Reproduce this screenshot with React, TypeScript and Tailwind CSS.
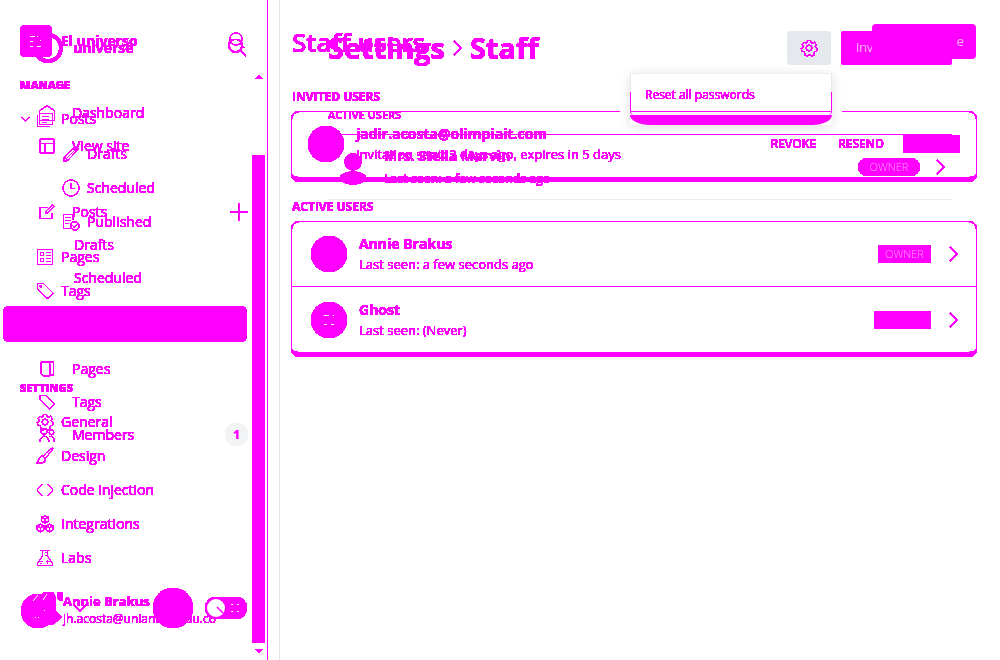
import React from 'react';

const INK = 'text-[#ff00ff] [filter:url(#ink)]';
const FONT = "font-['Open_Sans','Noto_Sans',sans-serif]";

type IconProps = { d: string; size?: string; box?: string; width?: string };

function Icon({ d, size = 'size-[18px]', box = '0 0 18 18', width = '1' }: IconProps) {
  return (
    <svg className={`${size} shrink-0`} viewBox={box} fill="none" stroke="currentColor" strokeWidth={width} aria-hidden="true">
      <path d={d} />
    </svg>
  );
}

const GEAR =
  'M7.4 1.5h3.2l.4 2 1.6.8 2-1 1.6 2.2-1 1.8.5 1.4 1.6.8-.6 2.8-2 .3-.8 1.4.4 2-2.4 1.2-1.6-1.6H8.5l-1.6 1.6-2.4-1.2.3-2-.9-1.4-2-.3-.6-2.8 1.7-.8.4-1.4-1-1.8L4 3.3l2 1 1.2-.8ZM9 6.2a2.8 2.8 0 1 0 0 5.6 2.8 2.8 0 0 0 0-5.6Z';
const PENCIL = 'M1.5 16.5l1-4.5L12.8 1.8q1.6-.8 3 1 .8 1-.2 2.4L5.8 15.3ZM2.8 12l3 3.2M11 3.6l3.2 3.2M4.4 13.6l8-8';
const CLOCK = 'M9 1a8 8 0 1 0 0 16A8 8 0 0 0 9 1ZM9 4.5V9.5h4';
const PUBLISHED = 'M8.5 15.5h-7v-14h9.5v5M3.5 4.5h5M3.5 7.5h5M3.5 10.5h3M12.8 8.6a4.2 4.2 0 1 0 0 8.4 4.2 4.2 0 0 0 0-8.4ZM10.8 13l1.5 1.4 2.5-3';
const PAGES = 'M.5.5h15v15H.5ZM3.5 3.5h3v3h-3ZM3.5 9.5h3v3h-3ZM9 3.5h4.5M9 6.5h4.5M9 9.5h4.5M9 12.5h4.5';
const TAG = 'M1.5 1.500h6l9 9q.8 1-.2 1.800l-3.800 3.600q-1 .8-1.800 0L1.500 7.500ZM4 3.500h1.200v1.500H4Z';
const BRUSH = 'M16.8 1.2q-2-.6-9.8 8l2 2q8-8 7.8-10ZM7 9.2q-3-.6-4 2.3-.4 3-2.5 4.5 6 1.3 8.2-1.4Q10 12.5 9 11.2';
const CODE = 'M6 3.5L1 9l5 5.5M12 3.5L17 9l-5 5.5';
const CUBES = 'M9 .8l3.5 1.6v4L9 8.2 5.5 6.4v-4ZM5.5 2.4L9 4.2l3.5-1.8M9 4.2v4M4.5 9.2L8 10.8v4L4.5 17 1 15v-4.2ZM1 10.8l3.5 1.8L8 10.8M4.5 12.6V17M13.5 9.2l3.5 1.6V15l-3.5 2-3.5-2v-4.2ZM10 10.8l3.5 1.8 3.5-1.8M13.5 12.6V17';
const FLASK = 'M4.5 1.5h9M6.5 1.5V7L1.5 14.5v2h15v-2L11.5 7V1.5M9.5 3.5h2M9 6.5h2M4 12.5h3M10.5 12.5h3M11.5 11.5v3M4.5 14.5h1';
const POSTS = 'M3.5 3.5h13v11h-13ZM1.5 5v11.5h12M6 6.5h7M6 9.5h7M6 12.5h5';
const HOUSE = 'M.5 5.5L8 .8l7.5 4.7v10H.5ZM4 8.5h7';
const LAYOUT = 'M1 2.5Q1 1 2.5 1h11Q15 1 15 2.5v11q0 1.5-1.5 1.5h-11Q1 15 1 13.5ZM1 5.5h14M6 5.5V15';
const EDIT = 'M9 3.5H1v11h12V9M6.5 9.5l1-3L13.5.8l1.7 1.7-6 6ZM6.5 9.5L9.2 8.5';
const PAGE_STACK = 'M4 1h10.5v13h-3M2 1h7q2 1 2 3v11H5q-3-1-3-3Z';
const TAG_OUTLINE = 'M1 1.5h6l8.3 8.3-5 5L1 6Z';
const MEMBERS = 'M5 1.5a3 3 0 1 0 0 6 3 3 0 0 0 0-6ZM12.5 3a2.3 2.3 0 1 0 0 4.6 2.3 2.3 0 0 0 0-4.6ZM.8 15q0-5 4.5-6 4.5 1 4.5 6M10.5 9.5q4.8-1 5 5.5';

function Row({ icon, label, sub = false, box }: { icon: string; label: string; sub?: boolean; box?: string }) {
  return (
    <li>
      <a href="#" className={`flex h-[34px] items-center gap-[7px] pb-px ${sub ? 'pl-[62px]' : 'pl-[36px]'} text-[14px]`}>
        <Icon d={icon} box={box} />
        {label}
      </a>
    </li>
  );
}

function ModernRow({ icon, label, children }: { icon?: string; label: string; children?: React.ReactNode }) {
  return (
    <li className={`flex h-[33px] items-center pr-[31px] ${icon ? 'pl-[39px]' : 'pl-[74px]'}`}>
      <a href="#" className="flex items-center gap-[17px] text-[14px]">
        {icon && <Icon d={icon} size="size-4" box="0 0 16 16" />}
        {label}
      </a>
      {children}
    </li>
  );
}

function Chevron({ width = '1.2' }: { width?: string }) {
  return <Icon d="M1 1l7 7-7 7" size="w-[9px] h-4" box="0 0 9 16" width={width} />;
}

function ClassicSidebar() {
  return (
    <aside className={`flex w-[268px] shrink-0 border-r border-[#ff00ff] font-medium ${INK}`}>
      <div className="flex min-w-0 flex-1 flex-col pt-[25px] pb-8">
        <div className="flex h-8 items-center gap-[9px] pr-[7px] pl-5">
          <svg className="size-8 shrink-0" viewBox="0 0 32 32" aria-hidden="true">
            <rect width="32" height="32" rx="5" fill="#ff00ff" />
            <path d="M10 11.5h5M17 11.5h3M17 15.5h4M15 18.5h2M10 21.5h3M16 21.5h5M19 13.5h1M10 16.5h3" stroke="#fff" />
          </svg>
          <strong className="text-[14px] leading-7 font-bold">El universo</strong>
          <button aria-label="Search" className="ml-auto">
            <Icon d="M9 1a6 6 0 1 0 0 12A6 6 0 0 0 9 1ZM13.5 11.5L17 16" />
          </button>
        </div>
        <h2 className="mt-[18px] pl-5 text-[11px] leading-5 font-extrabold">MANAGE</h2>
        <nav>
          <ul className="mt-[7px]">
            <li className="flex h-[34px] items-center pb-px pl-[20px]">
              <Icon d="M1 1l4.5 4L10 1" size="w-[11px] h-[6px]" box="0 0 11 6" />
              <a href="#" className="flex items-center gap-[7px] pl-[5px] text-[14px]">
                <Icon d={POSTS} />
                Posts
              </a>
            </li>
            <li>
              <ul className="my-px">
                <Row sub icon={PENCIL} label="Drafts" />
                <Row sub icon={CLOCK} label="Scheduled" />
                <Row sub icon={PUBLISHED} label="Published" />
              </ul>
            </li>
            <Row icon={PAGES} box="-1 -1 18 18" label="Pages" />
            <Row icon={TAG} label="Tags" />
            <li>
              <a href="#" aria-label="Staff" className="-mt-0.5 mr-[5px] ml-[3px] block h-9 rounded-md bg-[#ff00ff]" />
            </li>
          </ul>
          <h2 className="mt-9 pl-5 text-[11px] leading-5 font-extrabold">SETTINGS</h2>
          <ul className="mt-[7px]">
            <Row icon={GEAR} label="General" />
            <Row icon={BRUSH} label="Design" />
            <Row icon={CODE} label="Code injection" />
            <Row icon={CUBES} label="Integrations" />
            <Row icon={FLASK} label="Labs" />
          </ul>
        </nav>
        <div className="mt-auto flex h-9 pl-[21px] text-[12px] leading-[18px]">
          <svg className="h-9 w-[42px] shrink-0" viewBox="0 0 42 36" aria-hidden="true">
            <circle cx="17" cy="19" r="17" fill="#ff00ff" />
            <path d="M14 8L24 0h8l3 6v13l6 6-8 7-14 2Z" fill="#ff00ff" />
            <path d="M36 0h10v9h-7l-3-3Z" fill="#ff00ff" />
            <path d="M12 9l5-6M22 8l4-6M23 18.5h1M14 25.5h1M17 25.5h1" stroke="#fff" />
            <path d="M22 .5Q28-.5 33 1" stroke="#ff00ff" fill="none" />
          </svg>
          <div className="whitespace-nowrap">
            <div className="text-[13px] font-bold">Annie Brakus</div>
            <div>jh.acosta@uniandes.edu.co</div>
          </div>
        </div>
      </div>
      <div className="mr-[2px] flex w-[13px] flex-col items-center pt-[75px] pb-[7px]">
        <svg className="h-[4px] w-2" viewBox="0 0 8 4" fill="currentColor"><path d="M0 4l4-4 4 4Z" /></svg>
        <div className="mt-[76px] mb-[6px] w-full flex-1 bg-[#ff00ff]" />
        <svg className="h-[4px] w-2" viewBox="0 0 8 4" fill="currentColor"><path d="M0 0l4 4 4-4Z" /></svg>
      </div>
    </aside>
  );
}

function Member({ name, seen, avatar, children }: { name: string; seen: string; avatar?: React.ReactNode; children: React.ReactNode }) {
  return (
    <li className="flex h-[65px] items-center pr-[18px] pl-[19px]">
      <span className="grid size-9 shrink-0 place-items-center rounded-full bg-[#ff00ff]">{avatar}</span>
      <div className="ml-3 flex-1 leading-[21px]">
        <h3 className="text-[14px] font-bold">{name}</h3>
        <p className="text-[13px]">{seen}</p>
      </div>
      {children}
      <a href="#" aria-label={name} className="ml-[18px]"><Chevron /></a>
    </li>
  );
}

function ClassicMain() {
  return (
    <main className="min-w-0 flex-1 px-6 pt-6">
      <header className="flex h-[35px] items-center justify-between">
        <h1 className={`text-[26px] leading-8 font-semibold ${INK}`}>Staff users</h1>
        <button aria-label="Invite people" className="relative z-10 h-[35px] w-[104px] rounded-[4px] bg-[#ff00ff] pr-3 text-right text-[13px] font-light text-white">
          e
        </button>
      </header>
      <h2 className={`mt-[30px] text-[12px] leading-4 font-bold ${INK}`}>INVITED USERS</h2>
      <section className={`-mx-px mt-[6px] rounded-lg border border-b-[5px] border-[#ff00ff] ${INK}`}>
        <div className="flex h-[65px] items-center pr-4 pb-px pl-4">
          <span className="size-9 shrink-0 rounded-full bg-[#ff00ff]" />
          <div className="ml-3 flex-1 leading-[21px]">
            <h3 className="text-[14px] font-bold">jadir.acosta@olimpiait.com</h3>
            <p className="text-[13px]">Invitation sent: 2 days ago, expires in 5 days</p>
          </div>
          <button className="text-[12px] font-semibold">REVOKE</button>
          <button className="ml-[22px] text-[12px] font-semibold">RESEND</button>
          <span className="ml-[19px] h-[18px] w-[57px] rounded-[2px] bg-[#ff00ff]" />
        </div>
      </section>
      <h2 className={`mt-[17px] text-[12px] leading-4 font-bold ${INK}`}>ACTIVE USERS</h2>
      <ul className={`-mx-px mt-[6px] divide-y divide-[#ff00ff] rounded-lg border border-b-[5px] border-[#ff00ff] ${INK}`}>
        <Member name="Annie Brakus" seen="Last seen: a few seconds ago">
          <span className="h-[18px] w-[53px] bg-[#ff00ff] text-center text-[11px] leading-[18px] font-light text-white/60">OWNER</span>
        </Member>
        <Member
          name="Ghost"
          seen="Last seen: (Never)"
          avatar={
            <svg className="h-[10px] w-[10px]" viewBox="0 0 10 10" stroke="#fff" aria-hidden="true">
              <path d="M0 .5h5M9 .5h1M0 9.5h3M7 9.5h3" />
            </svg>
          }
        >
          <span className="h-[18px] w-[57px] rounded-[2px] bg-[#ff00ff]" />
        </Member>
      </ul>
    </main>
  );
}

function ModernSidebar() {
  return (
    <aside className="flex w-[280px] shrink-0 flex-col border-r border-[#e5e5e5] pt-[33px] pb-8 font-medium">
      <div className={`flex h-[30px] items-center gap-[10px] pr-[33px] pl-[33px] ${INK}`}>
        <svg className="size-[30px] shrink-0" viewBox="0 0 30 30" aria-hidden="true">
          <circle cx="15" cy="15" r="13" fill="none" stroke="#ff00ff" strokeWidth="3.5" />
        </svg>
        <strong className="text-[14px] leading-7 font-bold">universe</strong>
        <button aria-label="Search site" className="ml-auto">
          <Icon d="M7.5 0a6.5 6.5 0 1 0 0 13A6.5 6.5 0 0 0 7.5 0ZM12.5 11.5L18 17" width="1.5" />
        </button>
      </div>
      <nav className={INK}>
        <ul className="mt-[33px]">
          <ModernRow icon={HOUSE} label="Dashboard" />
          <ModernRow icon={LAYOUT} label="View site" />
        </ul>
        <ul className="mt-[33px]">
          <ModernRow icon={EDIT} label="Posts">
            <button aria-label="New post" className="ml-auto"><Icon d="M9 0v18M0 9h18" width="1.5" /></button>
          </ModernRow>
          <ModernRow label="Drafts" />
          <ModernRow label="Scheduled" />
        </ul>
        <ul className="mt-[58px]">
          <ModernRow icon={PAGE_STACK} label="Pages" />
          <ModernRow icon={TAG_OUTLINE} label="Tags" />
          <ModernRow icon={MEMBERS} label="Members">
            <span className="ml-auto grid size-[23px] place-items-center rounded-full bg-[#f1f3f4] text-[12px] font-extrabold">1</span>
          </ModernRow>
        </ul>
      </nav>
      <div className={`mt-auto flex h-10 items-center pr-8 pl-[73px] ${INK}`}>
        <Icon d="M1 1l6 6 6-6" size="w-[14px] h-[8px]" box="0 0 14 8" width="1.5" />
        <span className="ml-auto size-10 rounded-full bg-[#ff00ff]" />
        <label className="ml-3 flex">
          <input type="checkbox" aria-label="Night mode" className="peer sr-only" />
          <svg className="h-[22px] w-[42px]" viewBox="0 0 42 22" aria-hidden="true">
            <rect width="42" height="22" rx="11" fill="#ff00ff" />
            <circle cx="11" cy="11" r="9" fill="#fff" />
            <path d="M12 10l6 6" stroke="#ff00ff" strokeWidth="1.5" />
            <path d="M26 7.5h2M32 7.5h2M26 14.5h2M32 14.5h2" stroke="#fff" />
          </svg>
        </label>
      </div>
    </aside>
  );
}

function ModernMain() {
  return (
    <main className="min-w-0 flex-1 px-12 pt-[31px]">
      <header className="flex h-[34px] items-center">
        <h1 className={`flex items-center gap-2 text-[29px] leading-8 font-bold ${INK}`}>
          Settings
          <Chevron />
          Staff
        </h1>
        <div className="relative ml-auto">
          <button aria-label="Staff settings" className="grid h-[34px] w-11 place-items-center rounded-[3px] bg-[#e5e9ed]">
            <span className={INK}><Icon d={GEAR} /></span>
          </button>
          <div className="absolute top-[42px] -right-[11px] z-20 w-[222px] bg-white px-[10px] whitespace-nowrap">
            <div className="rounded-[3px] shadow-[0_2px_12px_rgba(0,0,0,0.13)]">
              <div className="bg-linear-to-b from-[#e8e8e8] from-[19px] to-[#ff00ff] to-[19px] px-px">
                <button className="block h-[38px] w-full border-t border-[#eeeeee] bg-white pt-[4px] pl-[14px] text-left text-[12px] leading-8 font-medium">
                  <span className={`inline-block leading-5 ${INK}`}>Reset all passwords</span>
                </button>
              </div>
              <div className="h-1 rounded-b-[4px] border border-b-0 border-[#ff00ff] bg-white" />
              <div className="h-[10px] rounded-b-[20px_10px] bg-[#ff00ff]" />
            </div>
          </div>
        </div>
        <button className="ml-[10px] h-[34px] w-[111px] rounded-[2px] bg-[#ff00ff] pl-[15px] text-left text-[13px] font-light text-white">
          Invite people
        </button>
      </header>
      <h2 className={`mt-[42px] text-[11px] leading-4 font-semibold ${INK}`}>ACTIVE USERS</h2>
      <div className="mt-[11px] h-px bg-linear-to-r from-white from-[14px] to-[#ff00ff] to-[14px]" />
      <section className="border-b border-[#ececec]">
        <div className={`flex h-16 items-center pr-[7px] pl-3 ${INK}`}>
          <svg className="h-9 w-[26px] shrink-0" viewBox="0 0 26 36" fill="currentColor" aria-hidden="true">
            <circle cx="13" cy="13" r="8.500" />
            <ellipse cx="13" cy="29" rx="13" ry="6.500" />
          </svg>
          <div className="ml-[18px] flex-1 leading-[23px]">
            <h3 className="text-[14px] font-bold">Mrs. Stella Marvin</h3>
            <p className="text-[12px] font-semibold">Last seen: a few seconds ago</p>
          </div>
          <span className="h-[18px] w-[62px] rounded-full bg-[#ff00ff] text-center text-[11px] leading-[18px] font-light text-white/60">OWNER</span>
          <a href="#" aria-label="Mrs. Stella Marvin" className="ml-4"><Chevron width="1.5" /></a>
        </div>
      </section>
    </main>
  );
}

export default function App() {
  return (
    <div className={`grid min-h-screen grid-cols-1 bg-white ${FONT}`}>
      <svg className="absolute size-0" aria-hidden="true">
        <filter id="ink" x="0" y="0" width="1" height="1" colorInterpolationFilters="sRGB">
          <feComponentTransfer>
            <feFuncA type="linear" slope="30" intercept="-1.2" />
          </feComponentTransfer>
        </filter>
      </svg>
      <div className="col-start-1 row-start-1 flex">
        <ClassicSidebar />
        <ClassicMain />
      </div>
      <div className="col-start-1 row-start-1 flex">
        <ModernSidebar />
        <ModernMain />
      </div>
    </div>
  );
}
